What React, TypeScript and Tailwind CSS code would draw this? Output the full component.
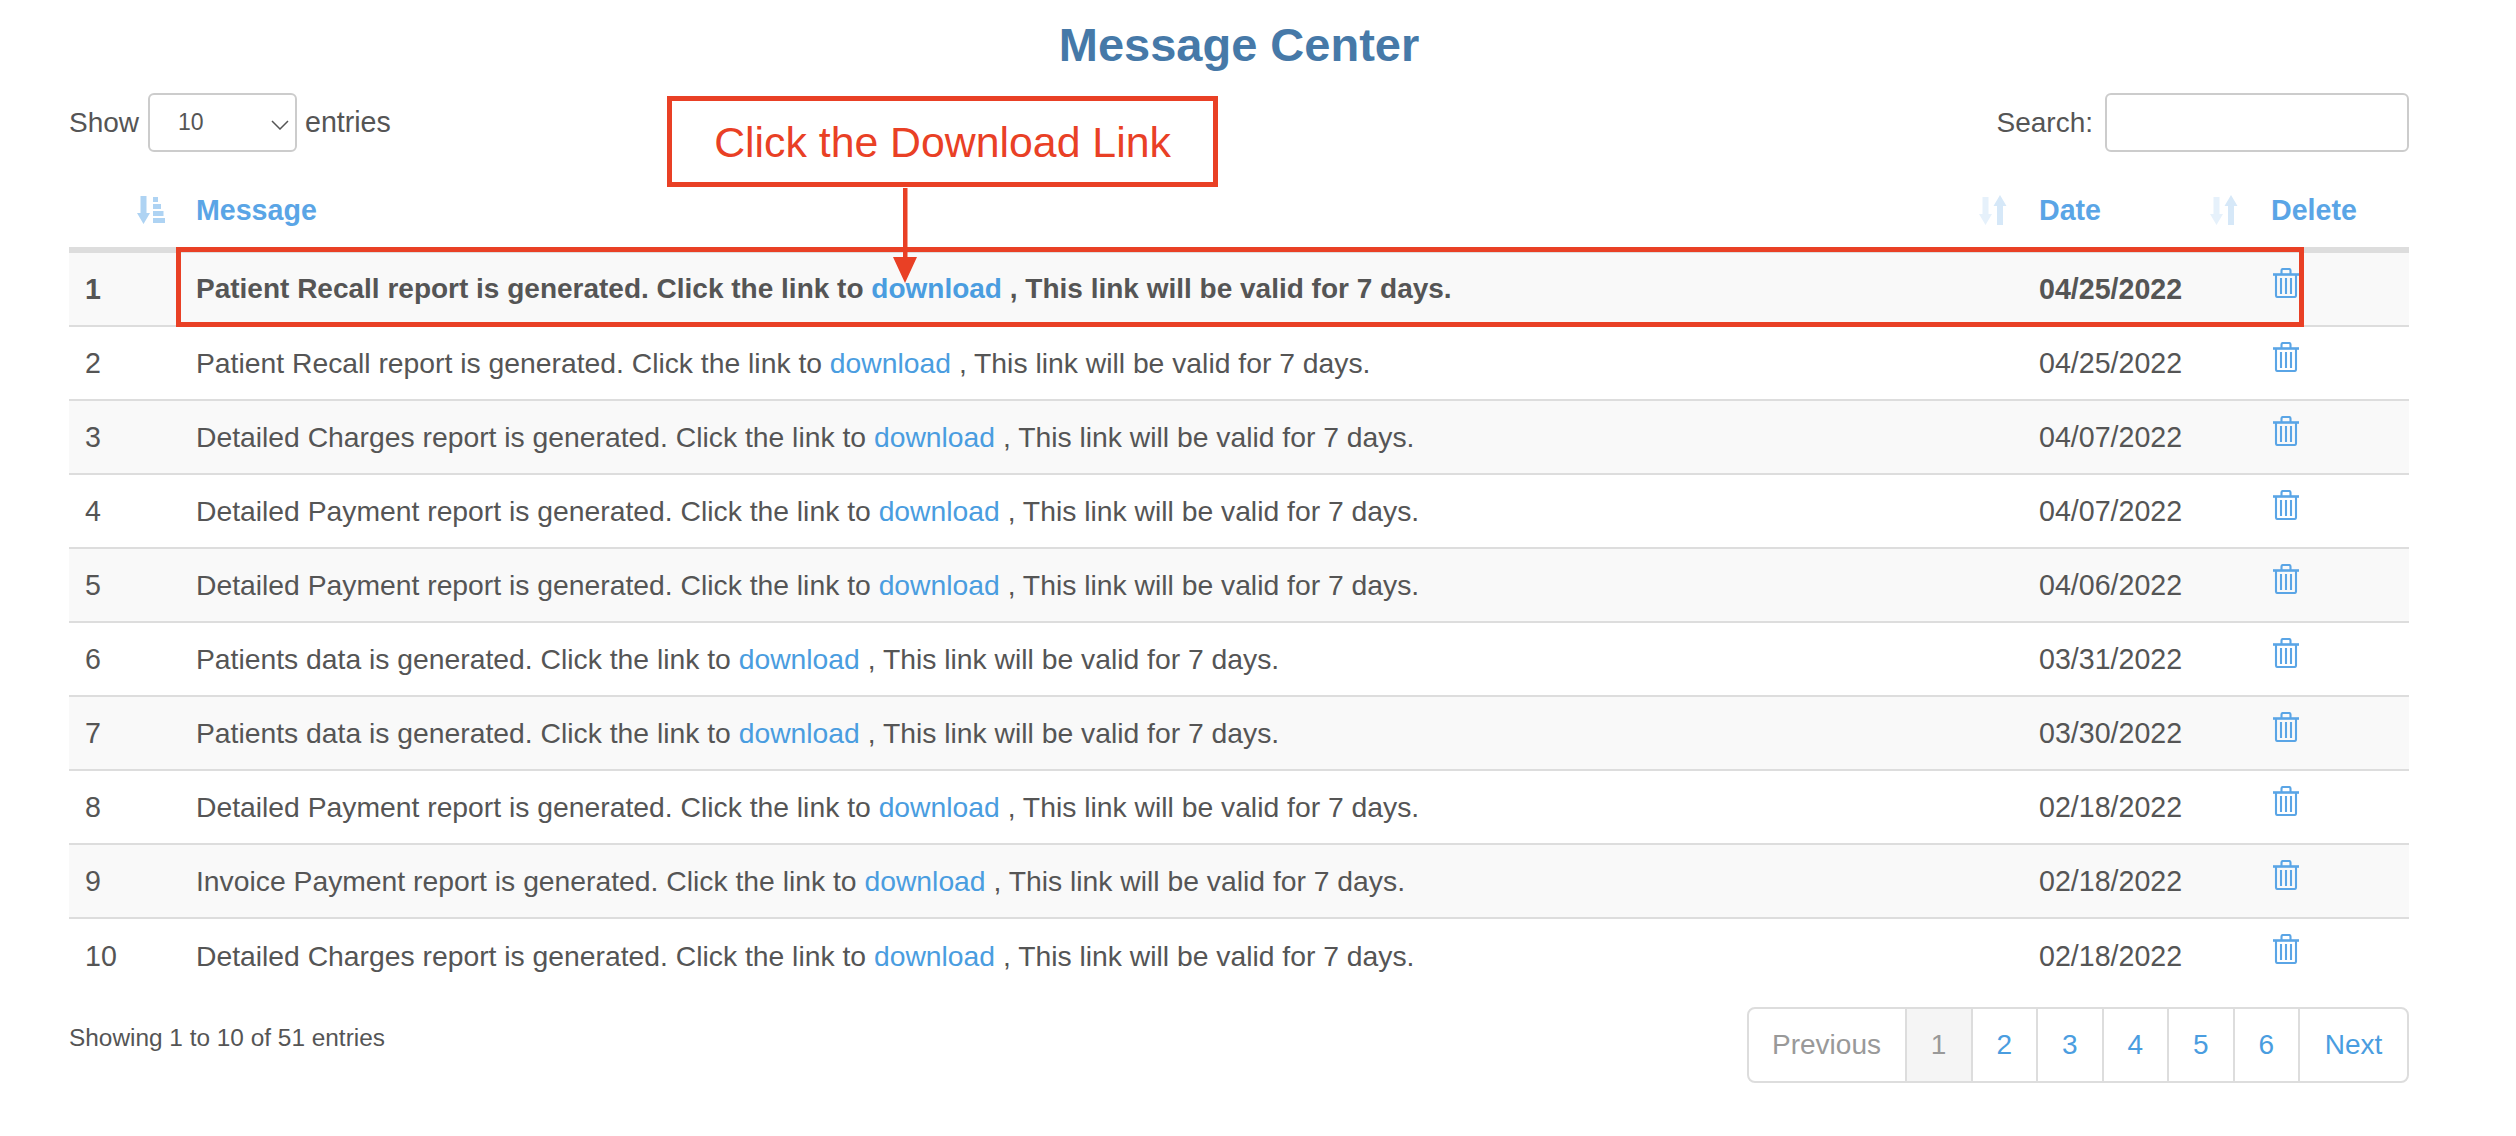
const rows = [
  { text: 'Patient Recall report is generated.', date: '04/25/2022' },
  { text: 'Patient Recall report is generated.', date: '04/25/2022' },
  { text: 'Detailed Charges report is generated.', date: '04/07/2022' },
  { text: 'Detailed Payment report is generated.', date: '04/07/2022' },
  { text: 'Detailed Payment report is generated.', date: '04/06/2022' },
  { text: 'Patients data is generated.', date: '03/31/2022' },
  { text: 'Patients data is generated.', date: '03/30/2022' },
  { text: 'Detailed Payment report is generated.', date: '02/18/2022' },
  { text: 'Invoice Payment report is generated.', date: '02/18/2022' },
  { text: 'Detailed Charges report is generated.', date: '02/18/2022' },
]

function SortedIcon() {
  return (
    <svg width="28" height="28" viewBox="0 0 28 28" fill="#aed3f3">
      <path d="M3.500 0h6v17H13L6.500 28 0 17h3.500z" />
      <rect x="16" y="1" width="5" height="5" />
      <rect x="16" y="8" width="8" height="5" />
      <rect x="16" y="15" width="10.500" height="5" />
      <rect x="16" y="22" width="12" height="5" />
    </svg>
  )
}

function UnsortedIcon() {
  return (
    <svg width="28" height="30" viewBox="0 0 28 30">
      <path d="M3.500 2h6v17H13L6.500 30 0 19h3.500z" fill="#e6f1fb" />
      <path d="M18 30V11h-3.500L21 0l6.500 11H24v19z" fill="#d6e8f8" />
    </svg>
  )
}

function TrashIcon() {
  return (
    <svg width="26" height="30" viewBox="0 0 26 30" fill="none" stroke="#5aa5e6" strokeWidth="2.100">
      <path d="M0 6.500h26" strokeWidth="2.600" />
      <path d="M8.500 6V2.500a1.500 1.500 0 0 1 1.500-1.500h6a1.500 1.500 0 0 1 1.500 1.500V6" />
      <path d="M3 7v20.500A1.500 1.500 0 0 0 4.500 29h17a1.500 1.500 0 0 0 1.500-1.500V7" />
      <path d="M8 10v16M13 10v16M18 10v16" />
    </svg>
  )
}

export default function App() {
  return (
    <div className="relative h-[1136px] overflow-hidden bg-white pl-[69px] pr-[107px] font-['Liberation_Sans',Arial,sans-serif] text-[28.6px] text-[#555]">
      <h1 className="h-[93px] pb-[3px] flex items-center justify-center text-[47px] font-bold text-[#4679a8]">
        Message Center
      </h1>

      {/* Toolbar */}
      <div className="h-[59px] flex items-center justify-between text-[28px]">
        <div className="flex items-center">
          <span className="w-[79px]">Show</span>
          <div className="relative w-[149px] h-[59px] border-2 border-[#ccc] rounded-[6px] flex items-center pl-[28px] text-[23px]">
            10
            <svg className="absolute right-[6px] top-[25px]" width="18" height="10" viewBox="0 0 18 10" fill="none" stroke="#555" strokeWidth="1.500">
              <path d="M1 1l8 8 8-8" />
            </svg>
          </div>
          <span className="ml-[8px] text-[28.6px]">entries</span>
        </div>
        <div className="flex items-center gap-[12px]">
          <span>Search:</span>
          <input className="w-[304px] h-[59px] border-2 border-[#ccc] rounded-[6px] outline-none" />
        </div>
      </div>

      {/* Table */}
      <table className="w-[2340px] table-fixed border-separate border-spacing-0">
        <thead>
          <tr className="text-[#5aa5e6] text-[28.6px] font-bold">
            <th className="w-[111px] h-[101px] align-bottom border-b-[6px] border-[#ddd] pb-[23px] pr-[15px]">
              <div className="flex justify-end">
                <SortedIcon />
              </div>
            </th>
            <th className="w-[1843px] align-bottom border-b-[6px] border-[#ddd] pb-[22px] pl-[16px] pr-[16px]">
              <div className="h-[30px] flex items-center justify-between">
                <span>Message</span>
                <UnsortedIcon />
              </div>
            </th>
            <th className="w-[232px] align-bottom border-b-[6px] border-[#ddd] pb-[22px] pl-[16px] pr-[17px]">
              <div className="h-[30px] flex items-center justify-between">
                <span>Date</span>
                <UnsortedIcon />
              </div>
            </th>
            <th className="align-bottom border-b-[6px] border-[#ddd] pb-[22px] pl-[16px] text-left">
              <div className="h-[30px] flex items-center">Delete</div>
            </th>
          </tr>
        </thead>
        <tbody>
          {rows.map((row, i) => (
            <tr key={i} className={`${i % 2 === 0 ? 'bg-[#f9f9f9]' : 'bg-white'} ${i === 0 ? 'font-bold' : ''}`}>
              <td className={`h-[74px] pl-[16px] ${i < 9 ? 'border-b-2 border-[#ddd]' : ''}`}>{i + 1}</td>
              <td className={`pl-[16px] ${i === 0 ? 'text-[28px]' : 'text-[28.3px]'} ${i < 9 ? 'border-b-2 border-[#ddd]' : ''}`}>
                {row.text} Click the link to <a className="text-[#4a9de0]">download</a> , This link will be valid for 7 days.
              </td>
              <td className={`pl-[16px] ${i < 9 ? 'border-b-2 border-[#ddd]' : ''}`}>{row.date}</td>
              <td className={`pl-[18px] pt-[15px] align-top ${i < 9 ? 'border-b-2 border-[#ddd]' : ''}`}>
                <TrashIcon />
              </td>
            </tr>
          ))}
        </tbody>
      </table>

      {/* Footer */}
      <div className="mt-[14px] flex items-start justify-between">
        <div className="pt-[13px] text-[24.4px]">Showing 1 to 10 of 51 entries</div>
        <div className="flex h-[76px] border-2 border-[#ddd] rounded-[8px] overflow-hidden text-[#4a9de0] text-[28px]">
          <span className="w-[158px] flex items-center justify-center text-[#999] border-r-2 border-[#ddd]">Previous</span>
          <span className="w-[66px] flex items-center justify-center text-[#999] bg-[#f5f5f5] border-r-2 border-[#ddd]">1</span>
          {[2, 3, 4, 5, 6].map((n) => (
            <span key={n} className="w-[65.500px] flex items-center justify-center border-r-2 border-[#ddd]">{n}</span>
          ))}
          <span className="flex-1 w-[107px] flex items-center justify-center">Next</span>
        </div>
      </div>

      {/* Annotation overlay */}
      <div className="absolute left-[667px] top-[96px] w-[551px] h-[91px] border-[5px] border-[#e94025] flex items-center justify-center pt-[1px] text-[42.8px] text-[#e94025]">
        Click the Download Link
      </div>
      <div className="absolute left-[176px] top-[247px] w-[2128px] h-[80px] border-[5px] border-[#e94025]" />
      <svg className="absolute left-[893px] top-[188px]" width="24" height="95" viewBox="0 0 24 95" fill="#e94025">
        <path d="M10 0h4.500v69H24L12 95 0 69h10z" />
      </svg>
    </div>
  )
}
